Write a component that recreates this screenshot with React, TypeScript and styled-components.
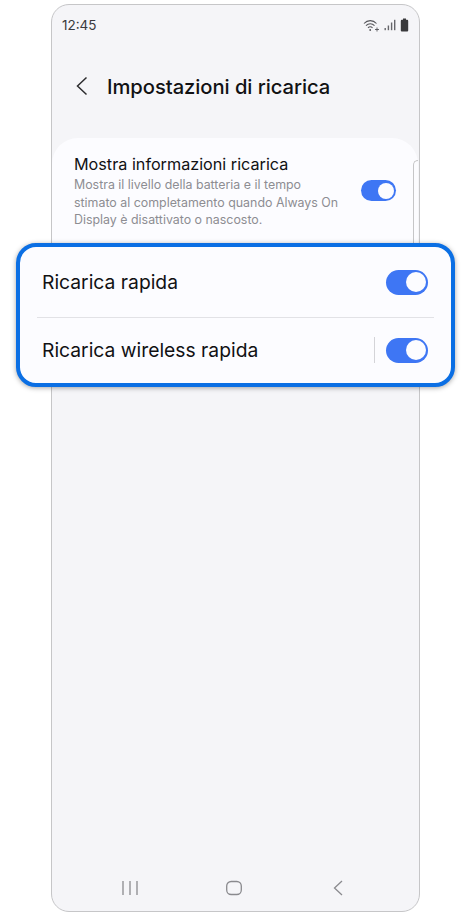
import styled, { createGlobalStyle } from "styled-components";

const GlobalStyle = createGlobalStyle`
  html, body {
    margin: 0;
    padding: 0;
    background: #ffffff;
  }
`;

const Page = styled.div`
  position: relative;
  width: 470px;
  height: 915px;
  box-sizing: border-box;
  padding: 4px 0 0 51px;
  overflow: hidden;
  font-family: Inter, "Noto Sans", sans-serif;
`;

const Phone = styled.main`
  width: 369px;
  height: 908px;
  box-sizing: border-box;
  display: flex;
  flex-direction: column;
  background: #f5f5f8;
  border: 1px solid #c6c6c8;
  border-radius: 18px;
`;

const StatusBar = styled.div`
  display: flex;
  align-items: center;
  justify-content: space-between;
  height: 40px;
  padding: 0 10px;
  color: #3a3a3c;
  font-size: 13.5px;
`;

const StatusIcons = styled.div`
  display: flex;
  align-items: center;
  gap: 4px;
`;

const Header = styled.header`
  display: flex;
  align-items: center;
  gap: 18px;
  height: 82px;
  padding: 0 0 0 23px;
`;

const Title = styled.h1`
  margin: 0;
  font-size: 20.2px;
  font-weight: 500;
  color: #111113;
  letter-spacing: -0.05px;
`;

const Card = styled.section`
  position: relative;
  width: 366px;
  height: 112px;
  box-sizing: border-box;
  display: flex;
  align-items: flex-start;
  justify-content: space-between;
  margin-top: 11px;
  padding: 16px 22px 0 22px;
  background: #fcfcff;
  border-radius: 26px 26px 0 0;
`;

const CardTitle = styled.div`
  font-size: 16.2px;
  line-height: 20px;
  color: #111113;
`;

const CardDesc = styled.div`
  margin-top: 2px;
  font-size: 12.4px;
  line-height: 17.5px;
  color: #8d8d92;
`;

const ScrollHint = styled.div`
  position: absolute;
  right: 0;
  top: 22px;
  width: 4px;
  height: 90px;
  border-left: 1px solid #c6c6c8;
  border-top: 1px solid #c6c6c8;
  border-radius: 5px 0 0 0;
`;

const SmallToggleSlot = styled.div`
  margin-top: 26px;
`;

const Spacer = styled.div`
  flex: 1;
`;

const NavBar = styled.nav`
  display: flex;
  align-items: center;
  justify-content: space-between;
  height: 46px;
  padding: 0 76px 0 70px;
`;

const Highlight = styled.section`
  position: absolute;
  left: 16px;
  top: 243px;
  width: 439px;
  height: 144px;
  box-sizing: border-box;
  display: flex;
  flex-direction: column;
  padding: 0 17px;
  background: #fcfcff;
  border: 4px solid #0b6fe4;
  border-radius: 20px;
  box-shadow: 0 1px 5px rgba(0, 0, 0, 0.35);
`;

const Row = styled.div<{ $divided?: boolean }>`
  display: flex;
  align-items: center;
  justify-content: space-between;
  height: ${(p) => (p.$divided ? 65 : 70)}px;
  box-sizing: border-box;
  padding: 0 6px 0 5px;
  border-top: ${(p) => (p.$divided ? "1px solid #e2e2e6" : "none")};
`;

const RowLabel = styled.span`
  font-size: 19.3px;
  color: #111113;
`;

const RowEnd = styled.div`
  display: flex;
  align-items: center;
  gap: 11px;
`;

const VLine = styled.div`
  width: 1px;
  height: 26px;
  background: #d4d4d8;
`;

const Switch = styled.div<{ $small?: boolean }>`
  width: ${(p) => (p.$small ? 35 : 42)}px;
  height: ${(p) => (p.$small ? 21 : 25)}px;
  box-sizing: border-box;
  display: flex;
  justify-content: flex-end;
  align-items: center;
  padding-right: 1px;
  background: #3e76f4;
  border-radius: 13px;
`;

const Knob = styled.div<{ $small?: boolean }>`
  width: ${(p) => (p.$small ? 16 : 20)}px;
  height: ${(p) => (p.$small ? 16 : 20)}px;
  margin-right: 1px;
  background: #fcfcff;
  border-radius: 50%;
`;

function StatusGlyphs() {
  return (
    <StatusIcons>
      <svg width="17" height="13" viewBox="0 0 17 13" fill="none" stroke="#55555a" strokeWidth="1.1">
        <path d="M1 4.5 C4.5 0.7 10 0.7 13.5 4.5" />
        <path d="M3 6.7 C5.5 4 9 4 11.5 6.7" />
        <path d="M5 8.8 C6.3 7.4 8.2 7.4 9.5 8.8" />
        <circle cx="7.2" cy="11" r="0.9" fill="#55555a" stroke="none" />
        <path d="M12 10.5 H16 M14 8.5 V12.5" strokeWidth="0.9" />
      </svg>
      <svg width="12" height="12" viewBox="0 0 12 12" fill="#66666b">
        <rect x="0.5" y="9" width="1.4" height="2.2" />
        <rect x="3.7" y="6.5" width="1.4" height="4.7" />
        <rect x="6.9" y="3.5" width="1.4" height="7.7" />
        <rect x="10" y="0.8" width="1.4" height="10.4" />
      </svg>
      <svg width="9" height="14" viewBox="0 0 9 14" fill="#3a3a3c">
        <path d="M3 0.5 H6 V1.8 H7.2 Q8.2 1.8 8.2 2.9 V12.5 Q8.2 13.5 7.2 13.5 H1.8 Q0.8 13.5 0.8 12.5 V2.9 Q0.8 1.8 1.8 1.8 H3 Z" />
      </svg>
    </StatusIcons>
  );
}

export default function App() {
  return (
    <Page>
      <GlobalStyle />
      <Phone>
        <StatusBar>
          <span>12:45</span>
          <StatusGlyphs />
        </StatusBar>
        <Header>
          <svg width="14" height="20" viewBox="0 0 14 20" fill="none" stroke="#2c2c2e" strokeWidth="1.5">
            <path d="M11.5 1.5 L2.5 10 L11.5 18.5" />
          </svg>
          <Title>Impostazioni di ricarica</Title>
        </Header>
        <Card>
          <div>
            <CardTitle>Mostra informazioni ricarica</CardTitle>
            <CardDesc>
              Mostra il livello della batteria e il tempo
              <br />
              stimato al completamento quando Always On
              <br />
              Display è disattivato o nascosto.
            </CardDesc>
          </div>
          <SmallToggleSlot>
            <Switch $small>
              <Knob $small />
            </Switch>
          </SmallToggleSlot>
          <ScrollHint />
        </Card>
        <Spacer />
        <NavBar>
          <svg width="16" height="16" viewBox="0 0 16 16" stroke="#8a8a8e" strokeWidth="1.3">
            <path d="M1 1 V15 M8 1 V15 M15 1 V15" />
          </svg>
          <svg width="19" height="16" viewBox="0 0 19 16" fill="none" stroke="#8a8a8e" strokeWidth="1.3">
            <rect x="0.7" y="1.5" width="14.6" height="13" rx="4.5" />
          </svg>
          <svg width="10" height="16" viewBox="0 0 10 16" fill="none" stroke="#8a8a8e" strokeWidth="1.3">
            <path d="M9 1 L1.5 8 L9 15" />
          </svg>
        </NavBar>
      </Phone>
      <Highlight>
        <Row>
          <RowLabel>Ricarica rapida</RowLabel>
          <Switch>
            <Knob />
          </Switch>
        </Row>
        <Row $divided>
          <RowLabel>Ricarica wireless rapida</RowLabel>
          <RowEnd>
            <VLine />
            <Switch>
              <Knob />
            </Switch>
          </RowEnd>
        </Row>
      </Highlight>
    </Page>
  );
}
